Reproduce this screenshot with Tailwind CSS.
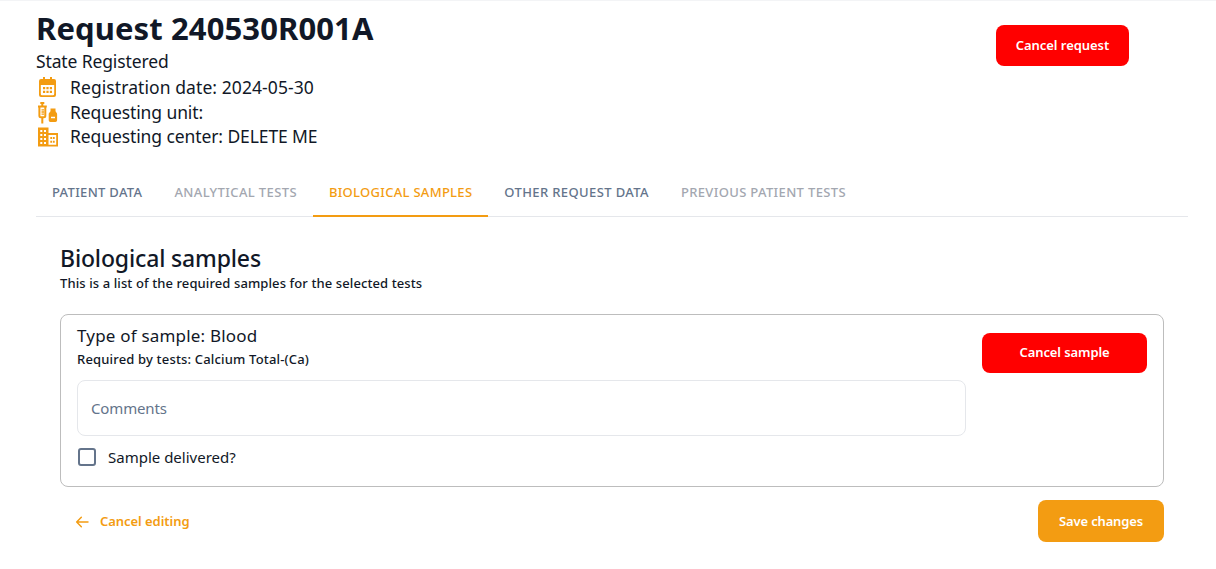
<!DOCTYPE html>
<html lang="en">
<head>
  <meta charset="UTF-8" />
  <title>Request 240530R001A</title>
  <script src="https://cdn.jsdelivr.net/npm/@tailwindcss/browser@4"></script>
</head>
<body class="bg-white font-['Noto_Sans',sans-serif] text-[#111827] border-t border-gray-100 h-[569px] overflow-hidden">

  <div class="pl-9 pr-7">
    <!-- header -->
    <div class="flex justify-between items-start h-[148px]">
      <div>
        <h1 class="text-[31px] leading-[36px] font-bold mt-[9px] tracking-[0.1px]">Request 240530R001A</h1>
        <p class="text-[17.5px] leading-[24px] mt-[3px] tracking-[-0.13px]">State Registered</p>
        <div class="flex items-center gap-[11px] h-[25px] mt-[2px] text-[17.5px] tracking-[0.08px]">
          <svg class="w-6 h-6 ml-[-1px] text-[#f39c12]" viewBox="0 0 24 24" fill="currentColor">
            <path d="M8 1h2v3H8zM15 1h2v3h-2z"/>
            <path fill-rule="evenodd" d="M6 3h13a2 2 0 0 1 2 2v14a2 2 0 0 1-2 2H6a2 2 0 0 1-2-2V5a2 2 0 0 1 2-2Zm-.2 6V18a1.2 1.2 0 0 0 1.2 1.2h11a1.2 1.2 0 0 0 1.2-1.2V9Z"/>
            <path d="M8 11h2.2v2.2H8zM11.4 11h2.2v2.2h-2.2zM14.8 11H17v2.2h-2.2zM8 14.8h2.2V17H8zM11.4 14.8h2.2V17h-2.2zM14.8 14.8H17V17h-2.2z"/>
          </svg>
          <span>Registration date: 2024-05-30</span>
        </div>
        <div class="flex items-center gap-[11px] h-[25px] text-[17.5px] tracking-[-0.1px]">
          <svg class="w-6 h-6 ml-[-1px] text-[#f39c12]" viewBox="0 0 24 24" fill="none" stroke="currentColor" stroke-width="2">
            <path d="M5.3 2h4M7.3 2v3M3 5.4h8.8M4.4 5.4v9.4a1.5 1.5 0 0 0 1.5 1.5h2.9a1.5 1.5 0 0 0 1.5-1.5V5.4M7.3 16.3V22.5"/>
            <path d="M6.5 8.8h2.5M6.5 11h2.5M6.5 13.2h2.5" stroke-width="1.3"/>
            <path fill="currentColor" stroke="none" d="M15.5 7.5h5v2.8l1.2 1.6c.3.4.4.8.4 1.2v6.2a1.7 1.7 0 0 1-1.7 1.7h-5a1.7 1.7 0 0 1-1.7-1.7v-6.2c0-.4.1-.8.4-1.2l1.4-1.6z"/>
            <path stroke="#fff" stroke-width="1.5" d="M16 16.5h4"/>
          </svg>
          <span>Requesting unit:</span>
        </div>
        <div class="flex items-center gap-[11px] h-[23px] text-[17.5px] tracking-[-0.1px]">
          <svg class="w-6 h-6 ml-[-1px] text-[#f39c12]" viewBox="0 0 24 24" fill="currentColor" fill-rule="evenodd">
            <path d="M3 2.5h10.5v5.5H23v13.5H3zM5.3 5v2h2V5zM9 5v2h2V5zM5.3 9v2h2V9zM9 9v2h2V9zM5.3 13v2h2v-2zM9 13v2h2v-2zM5.3 17v2h2v-2zM9 17v2h2v-2zM13.5 10v9.7h7.7V10zM15.3 12h1.9v2h-1.9zM18 12h1.7v2H18zM15.3 15.7h1.9v2h-1.9zM18 15.7h1.7v2H18z"/>
          </svg>
          <span>Requesting center: DELETE ME</span>
        </div>
      </div>
      <button class="mt-[24px] mr-[59px] w-[133px] h-[41px] bg-[#ff0000] text-white text-[13px] font-semibold rounded-lg tracking-[-0.05px]">Cancel request</button>
    </div>

    <!-- tabs -->
    <div class="flex border-b border-[#e5e7eb] h-[68px] text-[13px] font-medium">
      <a class="px-4 pt-[34px] text-[#64748b] tracking-[0.32px]">PATIENT DATA</a>
      <a class="px-4 pt-[34px] text-[#a3a7b0] tracking-[0.38px]">ANALYTICAL TESTS</a>
      <a class="px-4 pt-[34px] text-[#f39c12] border-b-2 border-[#f39c12] h-[68px] tracking-[0.29px]">BIOLOGICAL SAMPLES</a>
      <a class="px-4 pt-[34px] text-[#64748b] tracking-[0.38px]">OTHER REQUEST DATA</a>
      <a class="px-4 pt-[34px] text-[#a3a7b0] tracking-[0.35px]">PREVIOUS PATIENT TESTS</a>
    </div>

    <!-- samples -->
    <div class="px-6 pt-[25px]">
      <h2 class="text-[23px] leading-[32px] font-medium tracking-[-0.15px]">Biological samples</h2>
      <p class="text-[13px] leading-[20px] font-medium tracking-[0.1px] mt-[-1px]">This is a list of the required samples for the selected tests</p>

      <div class="mt-[21px] border border-[#bdbdbd] rounded-lg h-[173px] flex pl-4 pr-4">
        <div class="w-[889px]">
          <h3 class="text-[17px] leading-[24px] tracking-[0.2px] mt-[9px]">Type of sample: Blood</h3>
          <p class="text-[13px] leading-[20px] font-medium tracking-[0.17px] mt-[1px]">Required by tests: Calcium Total-(Ca)</p>
          <div class="mt-[11px] h-[56px] border border-[#e5e7eb] rounded-lg flex items-center px-[13px] text-[15px] text-[#64748b] tracking-[-0.15px]">Comments</div>
          <label class="flex items-center gap-[12px] mt-[10px] text-[15px]">
            <span class="w-[18px] h-[18px] ml-px border-2 border-[#64748b] rounded-[3px]"></span>
            Sample delivered?
          </label>
        </div>
        <button class="ml-auto mt-[18px] w-[165px] h-[40px] bg-[#ff0000] text-white text-[13px] font-semibold rounded-lg tracking-[-0.1px]">Cancel sample</button>
      </div>

      <div class="flex justify-between items-center mt-[13px]">
        <a class="flex items-center gap-[9px] pl-[14px] text-[13px] font-semibold text-[#f39c12] tracking-[-0.05px] translate-y-px">
          <svg class="w-4 h-4" viewBox="0 0 24 24" fill="none" stroke="currentColor" stroke-width="2.2" stroke-linecap="round" stroke-linejoin="round"><path d="M21 12H4M11 5l-7 7 7 7"/></svg>
          <span class="ml-px">Cancel editing</span>
        </a>
        <button class="w-[126px] h-[42px] pt-px bg-[#f39c12] text-white text-[13px] font-semibold rounded-lg tracking-[-0.15px]">Save changes</button>
      </div>
    </div>
  </div>

</body>
</html>
